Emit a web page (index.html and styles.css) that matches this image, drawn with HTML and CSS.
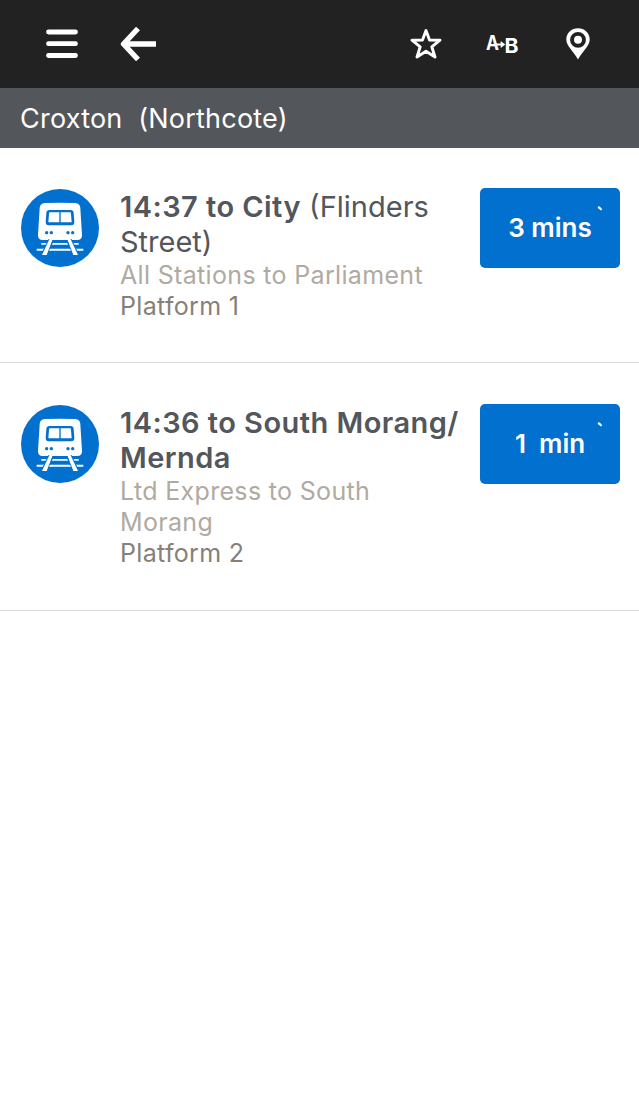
FILE: index.html
```html
<!DOCTYPE html>
<html lang="en">
<head>
<meta charset="utf-8">
<title>Departures</title>
<link rel="stylesheet" href="styles.css">
</head>
<body>
<svg class="defs" aria-hidden="true">
  <symbol id="train" viewBox="33 27 234 234">
    <circle cx="150" cy="144" r="117" fill="#0270ce"/>
    <path fill="#fff" d="M104 69Q150 67 196 69Q210 70 211 84L216 166Q216 180 202 180H98Q84 180 84 166L89 84Q90 70 104 69Z"/>
    <path fill="#0270ce" d="M118 90H182Q190 90 191 98L193 126Q193 136 184 136H116Q107 136 107 126L109 98Q110 90 118 90Z"/>
    <path fill="#fff" d="M120 97H148V127H115L117 101Q117 97 120 97ZM152 97H180Q183 97 183 101L185 127H152Z"/>
    <g fill="#0270ce"><circle cx="110" cy="158" r="5"/><circle cx="124" cy="158" r="5"/><circle cx="174" cy="158" r="5"/><circle cx="188" cy="158" r="5"/></g>
    <path fill="#fff" d="M94 189H206V194H94ZM80 206H220V212H80Z"/>
    <path stroke="#0270ce" stroke-width="17" d="M123 181L101 226M177 181L199 226"/>
    <path fill="#fff" d="M118 178H128L110 225H96ZM172 178H182L204 225H190Z"/>
  </symbol>
</svg>
<header class="bar">
  <svg class="icon menu" viewBox="0 0 32 30"><path d="M2.500 3H29.500M2.500 14.700H29.500M2.500 26.500H29.500" stroke-width="4.800" stroke-linecap="round"/></svg>
  <svg class="icon back" viewBox="0 0 36 36"><path d="M18 2.500L3.500 18L18 33.500M3.500 18H36" stroke-width="5.400" stroke-linejoin="round"/></svg>
  <svg class="icon star" viewBox="0 0 32 32"><path d="M16 2.500L19.500 12L30 12.200L21.800 18.800L25 29L16 23.200L7 29L10.200 18.800L2 12.200L12.500 12Z" stroke-width="2.900" stroke-linejoin="round"/></svg>
  <svg class="icon swap" viewBox="0 0 34 22"><text x="1" y="17" textLength="13" lengthAdjust="spacingAndGlyphs">A</text><text x="19.500" y="20.300" textLength="14" lengthAdjust="spacingAndGlyphs">B</text><path d="M11 11.500H17" stroke-width="2"/><path class="solid" d="M15.700 8L20.300 11.500L15.700 15Z"/></svg>
  <svg class="icon pin" viewBox="0 0 24 32"><path class="solid" fill-rule="evenodd" d="M12 0.300C5.500 0.300 0.300 5 0.300 11.500C0.300 18 7.500 23 12 31.500C16.500 23 23.700 18 23.700 11.500C23.700 5 18.500 0.300 12 0.300ZM12 4A7.900 7.900 0 1 0 12 19.800A7.900 7.900 0 1 0 12 4Z"/><circle class="solid" cx="12" cy="11.800" r="4"/></svg>
</header>
<div class="station">Croxton&nbsp; (Northcote)</div>
<main>
  <article class="departure">
    <svg class="mode"><use href="#train"/></svg>
    <div class="info">
      <h2 class="title"><b>14:37 to City</b> (Flinders<br>Street)</h2>
      <p class="stops">All Stations to Parliament</p>
      <p class="platform">Platform 1</p>
    </div>
    <div class="due">3 mins<svg class="live" viewBox="0 0 6 5"><path d="M1 1Q3 1.800 4.500 4"/></svg></div>
  </article>
  <article class="departure">
    <svg class="mode"><use href="#train"/></svg>
    <div class="info">
      <h2 class="title"><b>14:36 to South Morang/<br>Mernda</b></h2>
      <p class="stops">Ltd Express to South<br>Morang</p>
      <p class="platform">Platform 2</p>
    </div>
    <div class="due">1&nbsp; min<svg class="live" viewBox="0 0 6 5"><path d="M1 1Q3 1.800 4.500 4"/></svg></div>
  </article>
</main>
</body>
</html>
```
FILE: styles.css
```css
* { box-sizing: border-box; }
body { margin: 0; background: #fff; font-family: Inter, "Liberation Sans", sans-serif; }
.defs { display: none; }
.bar { height: 88px; padding: 0 49px 0 46px; display: flex; align-items: center; background: #222; }
.icon { display: block; fill: none; stroke: #fff; }
.icon .solid { fill: #fff; stroke: none; }
.menu { width: 32px; height: 30px; }
.back { width: 36px; height: 36px; margin-left: 42px; }
.star { width: 32px; height: 32px; margin-left: auto; }
.swap { width: 34px; height: 22px; margin-left: 43px; }
.swap text { font-size: 20px; font-weight: 700; fill: #fff; stroke: none; }
.pin { width: 24px; height: 32px; margin-left: 47px; }
.station { height: 60px; padding-left: 20px; line-height: 61px; background: #53565b; color: #fff; font-size: 27px; letter-spacing: 0.22px; }
.departure { display: flex; align-items: flex-start; padding: 40px 19px 40px 21px; border-bottom: 1px solid #d9d9d9; }
.departure:first-child { height: 215px; }
.departure:last-child { height: 248px; padding-top: 41px; }
.mode { width: 78px; height: 78px; margin-top: 1px; flex: none; }
.info { width: 360px; margin-left: 21px; padding-top: 1px; flex: none; }
.title { margin: 0 0 1px; font-size: 29px; line-height: 35px; font-weight: 400; color: #53565b; white-space: nowrap; }
.title b { font-weight: 600; letter-spacing: 0.45px; }
.stops, .platform { margin: 0; font-size: 25px; line-height: 31px; letter-spacing: 0.33px; }
.stops { color: #b0aaa2; }
.platform { color: #877f79; }
.due { position: relative; width: 140px; height: 80px; flex: none; border-radius: 5px; background: #0270ce; color: #fff; font-size: 26px; font-weight: 600; line-height: 80px; text-align: center; }
.live { position: absolute; top: 18px; right: 17px; width: 6px; height: 5px; fill: none; stroke: #fff; stroke-width: 2px; }
```
